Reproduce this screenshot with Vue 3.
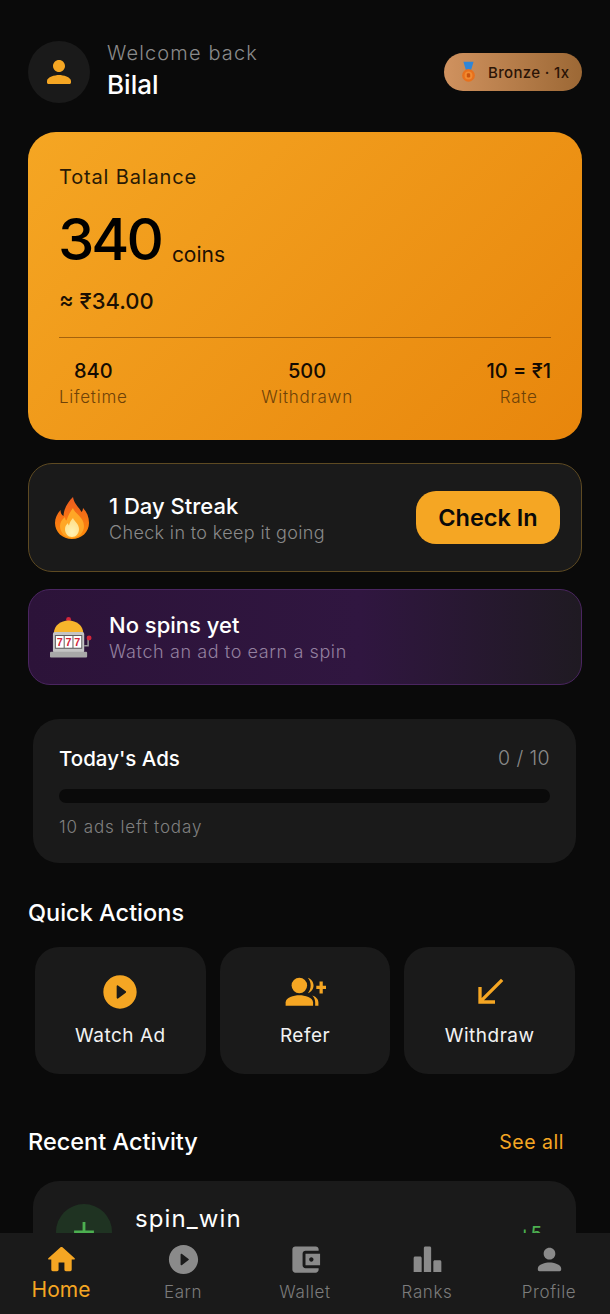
<template>
  <div class="page">
    <header class="top">
      <div class="avatar">
        <svg viewBox="0 0 24 24" class="avatar-icon"><path d="M12 12c2.21 0 4-1.79 4-4s-1.79-4-4-4-4 1.79-4 4 1.79 4 4 4zm0 2c-2.67 0-8 1.34-8 4v1c0 .55.45 1 1 1h14c.55 0 1-.45 1-1v-1c0-2.66-5.33-4-8-4z" /></svg>
      </div>
      <div class="hello">
        <div class="welcome">Welcome back</div>
        <div class="name">Bilal</div>
      </div>
      <div class="tier">
        <svg viewBox="0 0 20 26" class="medal">
          <path d="M4 1h12l-3 10H7z" fill="#2f86d8" />
          <circle cx="10" cy="17" r="7.5" fill="#e8701c" />
          <circle cx="10" cy="17" r="4.6" fill="#f28a30" />
          <rect x="8" y="14.5" width="4" height="5" rx="1.5" fill="#c9530f" />
        </svg>
        <span>Bronze · 1x</span>
      </div>
    </header>

    <section class="balance">
      <div class="bal-label">Total Balance</div>
      <div class="bal-row"><span class="bal-num">340</span><span class="bal-unit">coins</span></div>
      <div class="bal-money">≈ ₹34.00</div>
      <div class="stats">
        <div v-for="s in stats" :key="s.label" class="stat">
          <div class="stat-val">{{ s.value }}</div>
          <div class="stat-label">{{ s.label }}</div>
        </div>
      </div>
    </section>

    <section class="streak">
      <svg viewBox="0 0 36 42" class="flame">
        <defs>
          <linearGradient id="fl" x1="0" y1="0" x2="0" y2="1">
            <stop offset="0" stop-color="#ef5a1e" />
            <stop offset="1" stop-color="#ff8f0a" />
          </linearGradient>
          <radialGradient id="fl2" cx="0.5" cy="0.75" r="0.65">
            <stop offset="0" stop-color="#fff2b5" />
            <stop offset="1" stop-color="#ffe08a" />
          </radialGradient>
        </defs>
        <path d="M19 0c1 7 6 10 8.500 15 1-1 1.500-2.500 1.500-4 4 4 6 9 6 15 0 9-7.500 16-17 16S1 35 1 26c0-5 2-9 5.500-13 0 3 1 5 3 6C10 11 14 5 19 0z" fill="url(#fl)" />
        <path d="M19 11c1 5 11 9 11 18 0 7-5.500 12-12 12S6 36 6 29c0-4 2.500-7 5-9 0 2 .5 3 1.500 3.500C14 19 16 15 19 11z" fill="#ffa726" />
        <path d="M19 21c1 3 6 6 6 11 0 4.500-3 8-7 8s-7-3.500-7-8c0-3 1.500-4.500 3-6 0 1 .5 2 1 2.500C15.500 26 17 23 19 21z" fill="url(#fl2)" />
      </svg>
      <div class="row-text">
        <div class="row-title">1 Day Streak</div>
        <div class="row-sub">Check in to keep it going</div>
      </div>
      <button class="check">Check In</button>
    </section>

    <section class="spins">
      <svg viewBox="0 0 44 42" class="slot">
        <circle cx="19" cy="3" r="2.500" fill="#d3263a" />
        <path d="M4 20V17C4 9 11 4 19 4s15 5 15 13v3z" fill="#f7b52c" />
        <rect x="3" y="16" width="32" height="21" rx="2" fill="#c4c4c4" />
        <rect x="5" y="19" width="28" height="14" fill="#5a5a5a" />
        <rect x="6" y="20" width="8" height="12" fill="#fff" />
        <rect x="15" y="20" width="8" height="12" fill="#fff" />
        <rect x="24" y="20" width="8" height="12" fill="#fff" />
        <text x="10" y="30" class="seven">7</text>
        <text x="19" y="30" class="seven">7</text>
        <text x="28" y="30" class="seven">7</text>
        <rect x="0" y="36" width="38" height="6" rx="1" fill="#a8a8a8" />
        <path d="M35 30h4v-7" fill="none" stroke="#9a9a9a" stroke-width="1.500" />
        <circle cx="40" cy="22" r="2.500" fill="#d3263a" />
      </svg>
      <div class="row-text">
        <div class="row-title">No spins yet</div>
        <div class="row-sub">Watch an ad to earn a spin</div>
      </div>
    </section>

    <section class="ads">
      <div class="ads-head">
        <span class="ads-title">Today's Ads</span>
        <span class="ads-count">0 / 10</span>
      </div>
      <div class="track"></div>
      <div class="ads-left">10 ads left today</div>
    </section>

    <h2 class="section-title qa-title">Quick Actions</h2>
    <div class="actions">
      <div class="action">
        <svg viewBox="0 0 24 24" class="action-icon"><path d="M12 2C6.480 2 2 6.480 2 12s4.480 10 10 10 10-4.480 10-10S17.520 2 12 2zm-2 13.500v-7c0-.41.47-.65.8-.4l4.670 3.500c.27.2.27.6 0 .8l-4.670 3.500c-.33.25-.8.01-.8-.4z" /></svg>
        <span>Watch Ad</span>
      </div>
      <div class="action">
        <svg viewBox="0 0 26 24" class="action-icon refer">
          <circle cx="9.500" cy="8" r="4.800" />
          <path d="M1 20.500v-2c0-3 5-4.500 8.500-4.500s8.500 1.500 8.500 4.500v2z" />
          <path d="M14.800 3.200c2 .7 3.500 2.500 3.500 4.800s-1.500 4.100-3.500 4.800c1-1.300 1.700-3 1.700-4.800s-.7-3.500-1.700-4.800zM17.500 14.200c2.200.7 3.800 2.200 3.800 4.300v2h-2v-2c0-1.700-.6-3.100-1.800-4.300z" />
          <path d="M22 5.500h2v2.700h2v2h-2v2.700h-2v-2.700h-2v-2h2z" />
        </svg>
        <span>Refer</span>
      </div>
      <div class="action">
        <svg viewBox="0 0 24 24" class="action-icon"><path d="M20 5.410 18.590 4 7 15.590V9H5v10h10v-2H8.410z" /></svg>
        <span>Withdraw</span>
      </div>
    </div>

    <div class="recent-head">
      <h2 class="section-title">Recent Activity</h2>
      <span class="see-all">See all</span>
    </div>
    <section class="activity">
      <div class="act-icon">
        <svg viewBox="0 0 24 24" class="plus"><path d="M11 5h2v6h6v2h-6v6h-2v-6H5v-2h6z" /></svg>
      </div>
      <div class="act-name">spin_win</div>
      <div class="act-amount">+5</div>
    </section>

    <nav class="nav">
      <div v-for="n in nav" :key="n.label" class="nav-item" :class="{ on: n.active }">
        <svg viewBox="0 0 24 24" class="nav-icon"><path :d="n.d" /></svg>
        <span>{{ n.label }}</span>
      </div>
    </nav>
  </div>
</template>

<script setup>
const stats = [
  { value: '840', label: 'Lifetime' },
  { value: '500', label: 'Withdrawn' },
  { value: '10 = ₹1', label: 'Rate' }
]

const nav = [
  { label: 'Home', active: true, d: 'M10 19v-5h4v5c0 .55.45 1 1 1h3c.55 0 1-.45 1-1v-7h1.700c.46 0 .68-.57.33-.87L12.670 3.600c-.38-.34-.96-.34-1.340 0l-8.360 7.530c-.34.3-.13.87.33.87H5v7c0 .55.45 1 1 1h3c.55 0 1-.45 1-1z' },
  { label: 'Earn', d: 'M12 2C6.480 2 2 6.480 2 12s4.480 10 10 10 10-4.480 10-10S17.520 2 12 2zm-2 13.500v-7c0-.41.47-.65.8-.4l4.670 3.500c.27.2.27.6 0 .8l-4.670 3.500c-.33.25-.8.01-.8-.4z' },
  { label: 'Wallet', d: 'M21 18v1c0 1.100-.9 2-2 2H5c-1.110 0-2-.9-2-2V5c0-1.100.89-2 2-2h14c1.100 0 2 .9 2 2v1h-9c-1.110 0-2 .9-2 2v8c0 1.100.89 2 2 2h9zm-9-2h10V8H12v8zm4-2.500c-.83 0-1.500-.67-1.500-1.500s.67-1.500 1.500-1.500 1.500.67 1.500 1.500-.67 1.500-1.500 1.500z' },
  { label: 'Ranks', d: 'M3.500 10h3.500c.55 0 1 .45 1 1v9.500H2.500V11c0-.55.45-1 1-1zM10.500 3h3c.55 0 1 .45 1 1v16.500h-5V4c0-.55.45-1 1-1zM17 12.500h3.500c.55 0 1 .45 1 1v7h-5.500v-7c0-.55.45-1 1-1z' },
  { label: 'Profile', d: 'M12 12c2.210 0 4-1.790 4-4s-1.790-4-4-4-4 1.790-4 4 1.790 4 4 4zm0 2c-2.670 0-8 1.340-8 4v1c0 .55.45 1 1 1h14c.55 0 1-.45 1-1v-1c0-2.660-5.330-4-8-4z' }
]
</script>

<style scoped>
.page {
  height: 1314px;
  overflow: hidden;
  box-sizing: border-box;
  padding: 41px 28px 0;
  position: relative;
  color: #fff;
  font-family: Inter, "Noto Sans", sans-serif;
}

.top {
  display: flex;
  align-items: center;
  height: 62px;
}

.avatar {
  width: 62px;
  height: 62px;
  border-radius: 50%;
  background: #1a1a1a;
  display: flex;
  align-items: center;
  justify-content: center;
}

.avatar-icon {
  width: 36px;
  height: 36px;
  fill: #f5a623;
}

.hello {
  margin-left: 17px;
  margin-top: -1px;
  align-self: flex-start;
  flex: 1;
}

.welcome {
  font-size: 20px;
  line-height: 26px;
  font-weight: 300;
  letter-spacing: 1.150px;
  color: #8a8a8a;
  margin-bottom: 2px;
}

.name {
  font-size: 26px;
  line-height: 34px;
  font-weight: 500;
}

.tier {
  width: 138px;
  height: 38px;
  box-sizing: border-box;
  border-radius: 19px;
  background: linear-gradient(90deg, #d0925f, #9c6835 100%);
  display: flex;
  align-items: center;
  padding-left: 16px;
  gap: 11px;
  color: #2b1406;
  font-size: 15px;
  font-weight: 500;
  letter-spacing: 0.35px;
}

.medal {
  width: 17px;
  height: 22px;
}

.balance {
  height: 308px;
  margin-top: 29px;
  box-sizing: border-box;
  padding: 31px 31px 0;
  border-radius: 28px;
  background: linear-gradient(135deg, #f5a623, #e8860c);
  color: #000;
}

.bal-label {
  font-size: 20px;
  line-height: 28px;
  letter-spacing: 0.85px;
  color: #2a1a05;
}

.bal-row {
  display: flex;
  align-items: flex-end;
  gap: 11px;
  margin-top: 15px;
  height: 66px;
}

.bal-num {
  font-size: 58px;
  line-height: 66px;
  font-weight: 500;
  letter-spacing: -3px;
  margin-left: -1px;
}

.bal-unit {
  font-size: 21px;
  line-height: 34px;
  color: #1c1003;
}

.bal-money {
  margin-top: 14px;
  font-size: 22px;
  line-height: 30px;
  font-weight: 500;
  color: #1c1003;
}

.stats {
  display: flex;
  justify-content: space-between;
  margin-top: 21px;
  padding-top: 19px;
  border-top: 1px solid rgba(100, 50, 0, 0.55);
}

.stat {
  text-align: center;
}

.stat-val {
  font-size: 20px;
  line-height: 28px;
  font-weight: 500;
  color: #140b02;
}

.stat-label {
  font-size: 17px;
  line-height: 24px;
  font-weight: 300;
  letter-spacing: 0.75px;
  color: #6e4208;
}

.streak {
  height: 109px;
  margin-top: 23px;
  box-sizing: border-box;
  border: 1px solid #5e4a22;
  border-radius: 24px;
  background: #1a1a1a;
  display: flex;
  align-items: center;
  padding: 0 21px 0 25px;
}

.flame {
  width: 36px;
  height: 42px;
  margin-right: 19px;
}

.row-text {
  flex: 1;
}

.row-title {
  font-size: 22px;
  line-height: 30px;
  font-weight: 500;
}

.row-sub {
  font-size: 18px;
  line-height: 24px;
  font-weight: 300;
  letter-spacing: 0.35px;
  color: #8a8a8a;
}

.check {
  width: 144px;
  height: 53px;
  border: none;
  border-radius: 20px;
  background: #f5a623;
  color: #0a0a0a;
  font-family: inherit;
  font-size: 23.500px;
  font-weight: 600;
}

.spins {
  height: 96px;
  margin-top: 17px;
  box-sizing: border-box;
  border: 1px solid #4a2560;
  border-radius: 22px;
  background: linear-gradient(90deg, #2c1339 0%, #301640 60%, #1f1a22 100%);
  display: flex;
  align-items: center;
  padding: 0 21px;
}

.slot {
  width: 43px;
  height: 42px;
  margin-right: 16px;
}

.seven {
  font-family: "Liberation Sans", sans-serif;
  font-size: 11px;
  font-weight: 700;
  fill: #d3263a;
  text-anchor: middle;
}

.spins .row-sub {
  color: #93809f;
  letter-spacing: 0.6px;
}

.ads {
  height: 144px;
  margin: 34px 6px 0 5px;
  box-sizing: border-box;
  padding: 24px 26px 0;
  border-radius: 26px;
  background: #1a1a1a;
}

.ads-head {
  display: flex;
  justify-content: space-between;
  align-items: center;
  height: 30px;
}

.ads-title {
  font-size: 20.500px;
  font-weight: 500;
}

.ads-count {
  font-size: 19.500px;
  font-weight: 300;
  letter-spacing: 0.4px;
  color: #8a8a8a;
}

.track {
  height: 14px;
  margin-top: 16px;
  border-radius: 7px;
  background: #0a0a0a;
}

.ads-left {
  margin-top: 12px;
  font-size: 17px;
  line-height: 24px;
  font-weight: 300;
  letter-spacing: 0.9px;
  color: #808080;
}

.section-title {
  margin: 0;
  font-size: 23.500px;
  line-height: 34px;
  font-weight: 500;
}

.qa-title {
  margin-top: 33px;
}

.actions {
  display: grid;
  grid-template-columns: repeat(3, 1fr);
  gap: 14px;
  margin: 17px 7px 0;
}

.action {
  height: 127px;
  border-radius: 24px;
  background: #1a1a1a;
  display: flex;
  flex-direction: column;
  align-items: center;
  padding-top: 25px;
  box-sizing: border-box;
  font-size: 19px;
  letter-spacing: 0.5px;
}

.action span {
  margin-top: 11px;
  line-height: 26px;
  color: #f2f2f2;
}

.action-icon {
  width: 40px;
  height: 40px;
  fill: #f5a623;
}

.refer {
  width: 42px;
}

.recent-head {
  display: flex;
  justify-content: space-between;
  align-items: center;
  margin-top: 51px;
  padding-right: 18px;
}

.see-all {
  font-size: 19.500px;
  letter-spacing: 0.5px;
  color: #f5a623;
}

.activity {
  height: 120px;
  margin: 22px 6px 0 5px;
  box-sizing: border-box;
  padding: 23px 34px 0 23px;
  border-radius: 26px;
  background: #1a1a1a;
  display: flex;
  align-items: flex-start;
}

.act-icon {
  width: 56px;
  height: 56px;
  border-radius: 50%;
  background: #1f3322;
  display: flex;
  align-items: center;
  justify-content: center;
}

.plus {
  width: 34px;
  height: 34px;
  fill: #4caf50;
}

.act-name {
  flex: 1;
  margin-left: 23px;
  font-size: 24px;
  line-height: 30px;
  letter-spacing: 1.100px;
}

.act-amount {
  margin-top: 19px;
  font-size: 18px;
  font-weight: 500;
  color: #4caf50;
}

.nav {
  position: absolute;
  left: 0;
  right: 0;
  bottom: 0;
  height: 81px;
  background: #1a1a1a;
  display: flex;
}

.nav-item {
  flex: 1;
  display: flex;
  flex-direction: column;
  align-items: center;
  padding-top: 9px;
  box-sizing: border-box;
  color: #7c7c7c;
  font-size: 17px;
  font-weight: 300;
  letter-spacing: 0.6px;
}

.nav-item span {
  margin-top: 4px;
  line-height: 22px;
}

.nav-item.on {
  color: #f5a623;
  font-size: 21px;
  font-weight: 400;
  letter-spacing: 0;
}

.nav-item.on span {
  margin-top: 2px;
}

.nav-icon {
  width: 35px;
  height: 35px;
  fill: #8a8a8a;
}

.nav-item.on .nav-icon {
  fill: #f5a623;
}
</style>

<style>
html,
body {
  margin: 0;
  background: #0a0a0a;
}
</style>
